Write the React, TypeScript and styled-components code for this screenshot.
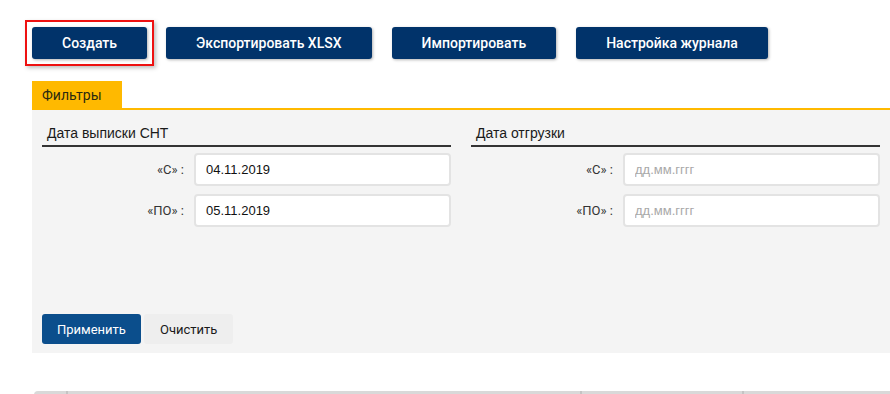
import styled, { createGlobalStyle } from 'styled-components';

const GlobalStyle = createGlobalStyle`
  html, body {
    margin: 0;
    padding: 0;
    background: #ffffff;
    overflow: hidden;
  }
  body {
    font-family: 'Liberation Sans', Arial, sans-serif;
  }
`;

interface DateRangeProps {
  title: string;
  from: string;
  to: string;
}

const DateRange = ({ title, from, to }: DateRangeProps): JSX.Element => (
  <DateRange.Section>
    <DateRange.Title>{title}</DateRange.Title>
    <DateRange.Row>
      <DateRange.Label>«С» :</DateRange.Label>
      <DateRange.Input placeholder="дд.мм.гггг" defaultValue={from} />
    </DateRange.Row>
    <DateRange.Row>
      <DateRange.Label>«ПО» :</DateRange.Label>
      <DateRange.Input placeholder="дд.мм.гггг" defaultValue={to} />
    </DateRange.Row>
  </DateRange.Section>
);

DateRange.Section = styled.div`
  width: 409px;
  display: flex;
  flex-direction: column;
  gap: 8px;
`;

DateRange.Title = styled.div`
  font-size: 14px;
  line-height: 16px;
  color: #1a1a1a;
  padding: 0 5px 4px;
  border-bottom: 2px solid #333333;
  margin-bottom: -2px;
`;

DateRange.Row = styled.div`
  display: flex;
  align-items: center;
  gap: 10px;
`;

DateRange.Label = styled.span`
  width: 142px;
  text-align: right;
  font-family: Roboto, 'Liberation Sans', sans-serif;
  font-size: 13px;
  color: #333333;
`;

DateRange.Input = styled.input`
  box-sizing: border-box;
  width: 257px;
  height: 33px;
  border: 2px solid #e3e3e3;
  border-radius: 4px;
  background: #ffffff;
  padding: 0 10px;
  font-family: 'Liberation Sans', Arial, sans-serif;
  font-size: 13px;
  color: #111111;
  outline: none;

  &::placeholder {
    color: #a8a8a8;
    font-size: 13px;
  }
`;

const FocusFrame = styled.div`
  margin: -7px -8px -7px -7px;
  padding: 5px;
  border: 2px solid #ee1111;
  box-shadow: 2px 2px 4px rgba(0, 0, 0, 0.25);
  display: flex;
`;

const ToolButton = styled.button`
  height: 32px;
  padding: 0 30px;
  border: none;
  border-radius: 3px;
  background: #01336a;
  color: #ffffff;
  font-family: Roboto, 'Liberation Sans', sans-serif;
  font-weight: 500;
  font-size: 14px;
  box-shadow: 1px 1px 3px rgba(0, 0, 0, 0.3);
  cursor: pointer;
`;

const Toolbar = styled.div`
  display: flex;
  gap: 20px;
  padding: 27px 0 0 32px;
`;

const Tabs = styled.div`
  margin: 22px 0 0 32px;
  border-bottom: 2px solid #ffb900;
  display: flex;
`;

const Tab = styled.div`
  width: 90px;
  height: 27px;
  box-sizing: border-box;
  padding: 6px 0 0 10px;
  background: #ffb900;
  font-family: Roboto, 'Liberation Sans', sans-serif;
  font-size: 14px;
  color: #2a2a10;
`;

const Panel = styled.div`
  margin-left: 32px;
  background: #f4f4f4;
  padding: 15px 10px 9px;
`;

const Columns = styled.div`
  display: flex;
  gap: 20px;
`;

const Actions = styled.div`
  display: flex;
  gap: 3px;
  margin-top: 87px;
`;

const ActionButton = styled.button<{ $primary?: boolean }>`
  height: 30px;
  padding: 0 ${(p) => (p.$primary ? '15px' : '16px')};
  border: none;
  border-radius: 3px;
  background: ${(p) => (p.$primary ? '#0b4e8c' : '#eeeeee')};
  color: ${(p) => (p.$primary ? '#ffffff' : '#1a1a1a')};
  font-family: Roboto, 'Liberation Sans', sans-serif;
  font-size: 13px;
  cursor: pointer;
`;

const Table = styled.div`
  margin: 38px 0 0 34px;
  height: 20px;
  background: #d9d9d9;
  border-top-left-radius: 4px;
  display: grid;
  grid-template-columns: 34px 514px 162px 1fr;
`;

const HeadCell = styled.div`
  border-right: 2px solid #c4c4c4;

  &:last-child {
    border-right: none;
  }
`;

export default function App(): JSX.Element {
  return (
    <>
      <GlobalStyle />
      <Toolbar>
        <FocusFrame>
          <ToolButton>Создать</ToolButton>
        </FocusFrame>
        <ToolButton>Экспортировать XLSX</ToolButton>
        <ToolButton>Импортировать</ToolButton>
        <ToolButton>Настройка журнала</ToolButton>
      </Toolbar>
      <Tabs>
        <Tab>Фильтры</Tab>
      </Tabs>
      <Panel>
        <Columns>
          <DateRange title="Дата выписки СНТ" from="04.11.2019" to="05.11.2019" />
          <DateRange title="Дата отгрузки" from="" to="" />
        </Columns>
        <Actions>
          <ActionButton $primary>Применить</ActionButton>
          <ActionButton>Очистить</ActionButton>
        </Actions>
      </Panel>
      <Table>
        <HeadCell />
        <HeadCell />
        <HeadCell />
        <HeadCell />
      </Table>
    </>
  );
}
